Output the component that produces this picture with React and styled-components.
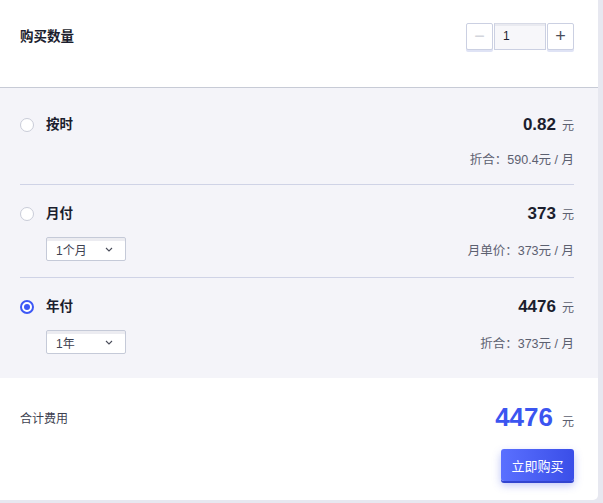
import React from "react";
import styled, { createGlobalStyle } from "styled-components";

const GlobalStyle = createGlobalStyle`
  html, body {
    margin: 0;
    padding: 0;
    background: #e7e8f0;
  }
  body {
    font-family: "Liberation Sans", "Noto Sans CJK SC", sans-serif;
    color: #1b1e2e;
  }
`;

const Card = styled.div`
  width: 598px;
  height: 500px;
  background: #fff;
  border-radius: 0 0 5px 0;
  overflow: hidden;
  display: flex;
  flex-direction: column;
`;

const Header = styled.div`
  display: flex;
  align-items: center;
  justify-content: space-between;
  padding: 23px 24px 37px 20px;
  border-bottom: 1px solid #c7cbd6;
`;

const Title = styled.div`
  font-size: 13.5px;
  font-weight: 700;
  line-height: 22px;
  color: #1b1e2e;
`;

const Stepper = styled.div`
  display: flex;
  height: 27px;
`;

const StepButton = styled.button`
  width: 27px;
  height: 27px;
  padding: 0;
  border: 1px solid #cbd0e2;
  border-radius: 2px;
  background: #fff;
  box-shadow: 0 2px 0 #dfe3f5;
  color: ${(p) => (p.disabled ? "#d3d5dc" : "#4a4d5a")};
  display: flex;
  align-items: center;
  justify-content: center;
  font-size: 18px;
  font-family: "Liberation Sans", sans-serif;
  cursor: pointer;
`;

const StepInput = styled.div`
  width: 52px;
  height: 27px;
  box-sizing: border-box;
  border: 1px solid #cbd0e2;
  border-top: 1px solid #d7dae6;
  background: #f7f7fa;
  box-shadow: inset 0 2px 0 #e9eaf0;
  font-size: 12px;
  line-height: 25px;
  padding-left: 8px;
  color: #1b1e2e;
  margin: 0 1px;
`;

const Options = styled.div`
  background: #f4f4f9;
  padding: 8px 24px 8px 20px;
`;

const Option = styled.div`
  padding: 18px 0 16px;
  border-bottom: ${(p) => (p.last ? "none" : "1px solid #cfd3e6")};
`;

const Line = styled.div`
  display: flex;
  align-items: center;
  justify-content: space-between;
`;

const TopLine = styled(Line)`
  height: 22px;
  margin-bottom: 12px;
`;

const SubLine = styled(Line)`
  min-height: ${(p) => (p.tall ? "24px" : "20px")};
`;

const Left = styled.div`
  display: flex;
  align-items: center;
  gap: 12px;
`;

const Radio = styled.span`
  width: 14px;
  height: 14px;
  box-sizing: border-box;
  border-radius: 50%;
  border: ${(p) => (p.checked ? "2px solid #3d58f5" : "1px solid #c9ccd8")};
  background: #fff;
  display: flex;
  align-items: center;
  justify-content: center;
  &::after {
    content: "";
    width: 6px;
    height: 6px;
    border-radius: 50%;
    background: ${(p) => (p.checked ? "#3d58f5" : "transparent")};
  }
`;

const Price = styled.div`
  display: flex;
  align-items: baseline;
`;

const Amount = styled.span`
  font-size: 17px;
  font-weight: 700;
  color: #1b1e2e;
`;

const Unit = styled.span`
  font-size: 12px;
  color: #5c6070;
  margin-left: ${(p) => p.gap || 6}px;
`;

const Select = styled.div`
  margin-left: 26px;
  width: 80px;
  height: 24px;
  box-sizing: border-box;
  border: 1px solid #c5cad8;
  border-radius: 2px;
  background: #fff;
  box-shadow: inset 0 3px 0 #ececf1;
  display: flex;
  align-items: center;
  justify-content: space-between;
  padding: 0 12px 0 9px;
  font-size: 12px;
  color: #3d4150;
`;

const Note = styled.div`
  font-size: 12.5px;
  color: #5c6070;
`;

const Footer = styled.div`
  padding: 22px 24px 19px 20px;
  display: flex;
  flex-direction: column;
  align-items: stretch;
`;

const TotalRow = styled(Line)`
  height: 34px;
  margin-bottom: 15px;
`;

const TotalLabel = styled.div`
  font-size: 12px;
  color: #3d4150;
`;

const TotalAmount = styled.span`
  font-size: 26px;
  font-weight: 700;
  color: #3b55f0;
`;

const BuyButton = styled.button`
  align-self: flex-end;
  width: 73px;
  height: 32px;
  border: none;
  border-radius: 3px;
  background: linear-gradient(90deg, #5a70ff, #3a4ee8);
  box-shadow: 0 2px 0 #3345d0, 0 4px 8px rgba(60, 80, 230, 0.35);
  color: #fff;
  font-size: 13px;
  font-family: "Liberation Sans", "Noto Sans CJK SC", sans-serif;
  cursor: pointer;
`;

const Chevron = () => (
  <svg width="8" height="5" viewBox="0 0 8 5" fill="none">
    <path d="M1 1l3 3 3-3" stroke="#4a4d5a" strokeWidth="1.1" />
  </svg>
);

const plans = [
  { name: "按时", price: "0.82", note: "折合：590.4元 / 月" },
  { name: "月付", price: "373", note: "月单价：373元 / 月", select: "1个月" },
  { name: "年付", price: "4476", note: "折合：373元 / 月", select: "1年", checked: true },
];

export default function App() {
  return (
    <>
      <GlobalStyle />
      <Card>
        <Header>
          <Title>购买数量</Title>
          <Stepper>
            <StepButton disabled>−</StepButton>
            <StepInput>1</StepInput>
            <StepButton>+</StepButton>
          </Stepper>
        </Header>
        <Options>
          {plans.map((p, i) => (
            <Option key={p.name} last={i === plans.length - 1}>
              <TopLine>
                <Left>
                  <Radio checked={p.checked} />
                  <Title>{p.name}</Title>
                </Left>
                <Price>
                  <Amount>{p.price}</Amount>
                  <Unit>元</Unit>
                </Price>
              </TopLine>
              <SubLine tall={!!p.select}>
                {p.select ? (
                  <Select>
                    {p.select}
                    <Chevron />
                  </Select>
                ) : (
                  <span />
                )}
                <Note>{p.note}</Note>
              </SubLine>
            </Option>
          ))}
        </Options>
        <Footer>
          <TotalRow>
            <TotalLabel>合计费用</TotalLabel>
            <Price>
              <TotalAmount>4476</TotalAmount>
              <Unit gap={9}>元</Unit>
            </Price>
          </TotalRow>
          <BuyButton>立即购买</BuyButton>
        </Footer>
      </Card>
    </>
  );
}
